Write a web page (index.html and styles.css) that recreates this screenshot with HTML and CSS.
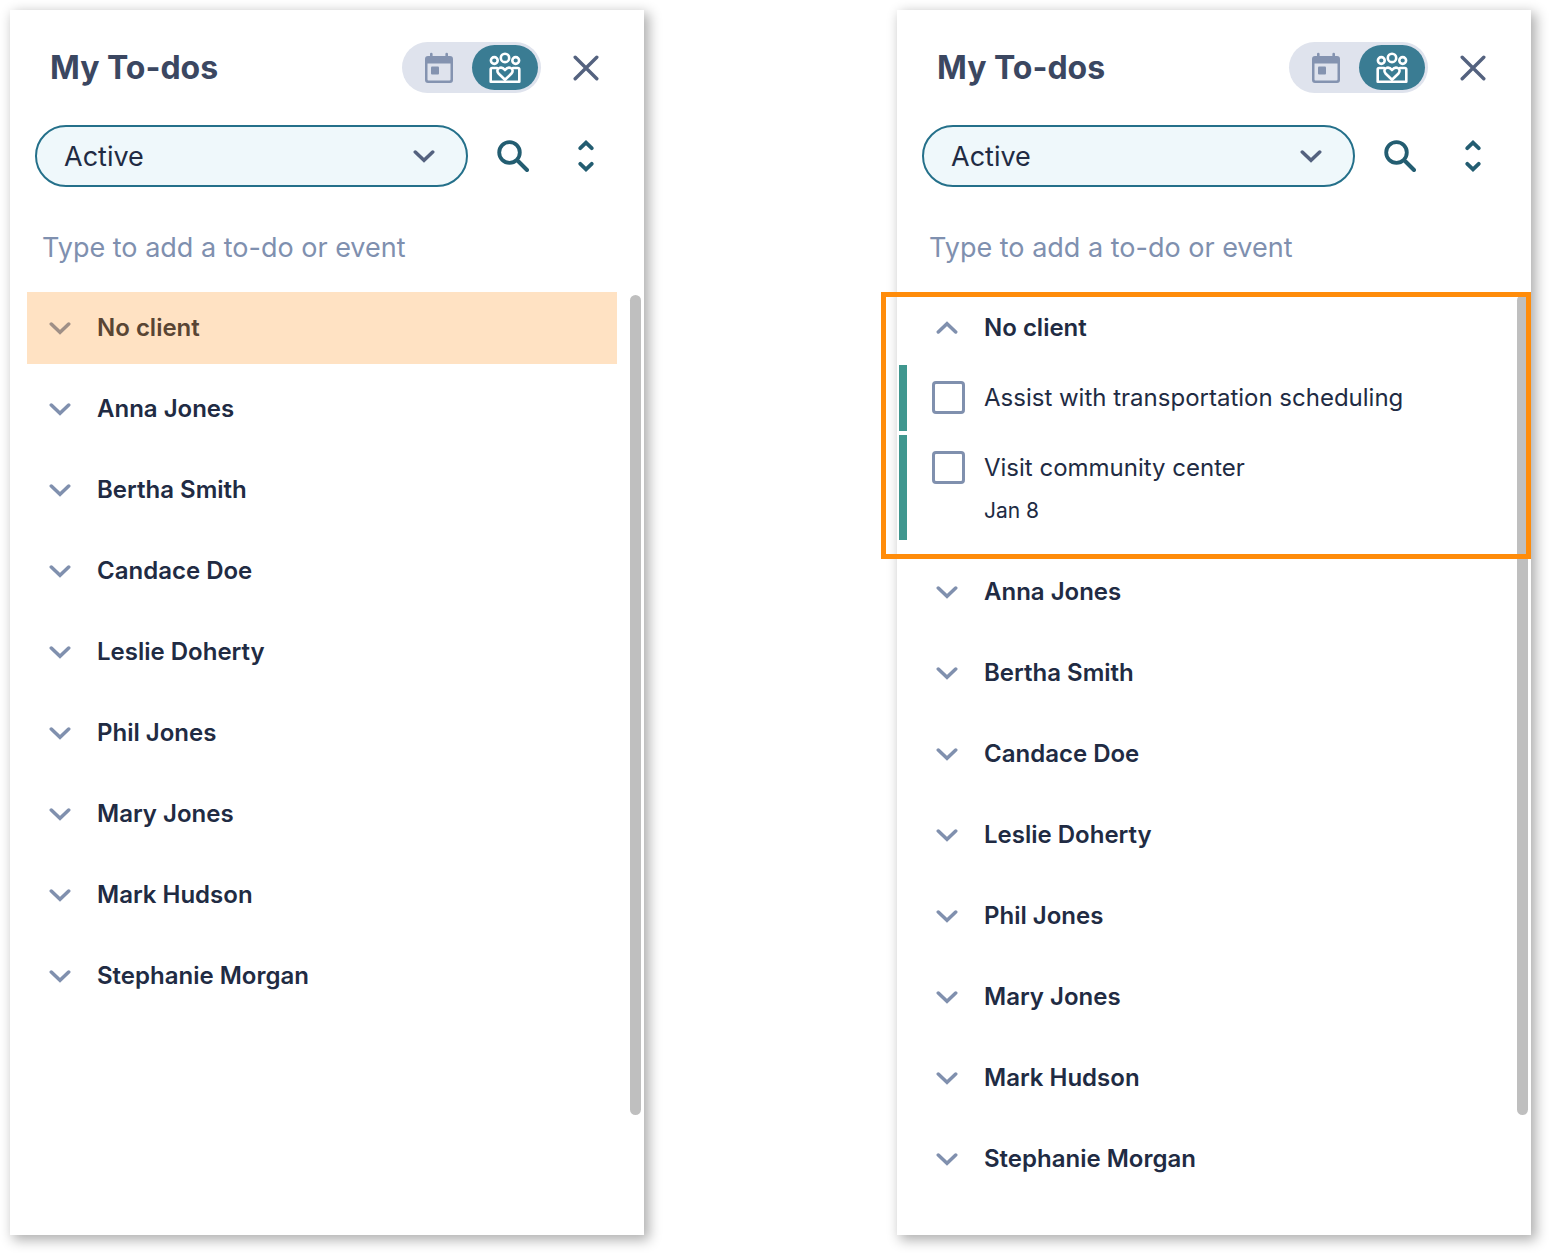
FILE: index.html
```html
<!DOCTYPE html>
<html lang="en">
<head>
    <meta charset="UTF-8">
    <title>My To-dos</title>
    <meta name="viewport" content="width=device-width, initial-scale=1.0">
    <link rel="stylesheet" href="styles.css">
</head>
<body>
    <!-- Shared icons -->
    <svg class="sprite" aria-hidden="true">
        <symbol id="chevron" viewBox="0 0 22 14">
            <path d="M2.300 3 11 11.300 19.700 3" fill="none" stroke="currentColor" stroke-width="3.500" stroke-linejoin="miter" stroke-linecap="round"/>
        </symbol>
        <symbol id="calendar" viewBox="0 0 28 32">
            <path d="M6.300 2v5M21.700 2v5" stroke="currentColor" stroke-width="2.600" stroke-linecap="round"/>
            <path fill-rule="evenodd" fill="currentColor" d="M3 4h22a3 3 0 0 1 3 3V28a3 3 0 0 1-3 3H3a3 3 0 0 1-3-3V7a3 3 0 0 1 3-3zM2.500 11.500V27.500a1 1 0 0 0 1 1h21a1 1 0 0 0 1-1V11.500z"/>
            <rect x="6" y="14.500" width="8" height="8" rx="1" fill="currentColor"/>
        </symbol>
        <symbol id="people" viewBox="0 0 32 32">
            <g fill="none" stroke="currentColor" stroke-width="2.600" stroke-linejoin="round" stroke-linecap="round">
                <circle cx="16" cy="5.900" r="4.200"/>
                <circle cx="5.300" cy="8.500" r="3.400"/>
                <circle cx="26.700" cy="8.500" r="3.400"/>
                <path d="M8 16H3.200a1.500 1.500 0 0 0-1.500 1.500V29.800h28.600V17.500a1.500 1.500 0 0 0-1.500-1.500H24"/>
                <path d="M16 27.800 9.500 21.500c-3.600-4.300 2.500-8.500 6.500-3.500 4-5 10.100-.8 6.500 3.500z"/>
            </g>
        </symbol>
        <symbol id="close" viewBox="0 0 26 26">
            <path d="M2.200 2.200l21.600 21.600M23.800 2.200L2.200 23.800" stroke="currentColor" stroke-width="3.400" stroke-linecap="round"/>
        </symbol>
        <symbol id="search" viewBox="0 0 32 32">
            <circle cx="12.500" cy="12.500" r="10.300" fill="none" stroke="currentColor" stroke-width="3.800"/>
            <path d="M21.500 21.500l8.500 8.500" stroke="currentColor" stroke-width="4" stroke-linecap="round"/>
        </symbol>
        <symbol id="sort" viewBox="0 0 16 32">
            <path d="M2.300 8.200 8 2.700l5.700 5.500M2.300 23.800 8 29.300l5.700-5.500" fill="none" stroke="currentColor" stroke-width="3.800" stroke-linecap="round"/>
        </symbol>
    </svg>

    <main class="page">
        <section class="panel">
            <header class="panel-header">
                <h2>My To-dos</h2>
                <div class="view-toggle">
                    <button type="button" aria-label="Calendar view"><svg class="icon-calendar"><use href="#calendar"/></svg></button>
                    <button type="button" class="selected" aria-label="Client view"><svg class="icon-people"><use href="#people"/></svg></button>
                </div>
                <button type="button" class="icon-button" aria-label="Close"><svg class="icon-close"><use href="#close"/></svg></button>
            </header>

            <div class="filters">
                <div class="select">
                    <select aria-label="Status"><option>Active</option></select>
                    <svg class="select-arrow"><use href="#chevron"/></svg>
                </div>
                <button type="button" class="icon-button" aria-label="Search"><svg class="icon-search"><use href="#search"/></svg></button>
                <button type="button" class="icon-button" aria-label="Sort"><svg class="icon-sort"><use href="#sort"/></svg></button>
            </div>

            <input class="new-todo" type="text" aria-label="New to-do" placeholder="Type to add a to-do or event">

            <div class="list">
                <button type="button" class="client highlighted"><svg><use href="#chevron"/></svg>No client</button>
                <button type="button" class="client"><svg><use href="#chevron"/></svg>Anna Jones</button>
                <button type="button" class="client"><svg><use href="#chevron"/></svg>Bertha Smith</button>
                <button type="button" class="client"><svg><use href="#chevron"/></svg>Candace Doe</button>
                <button type="button" class="client"><svg><use href="#chevron"/></svg>Leslie Doherty</button>
                <button type="button" class="client"><svg><use href="#chevron"/></svg>Phil Jones</button>
                <button type="button" class="client"><svg><use href="#chevron"/></svg>Mary Jones</button>
                <button type="button" class="client"><svg><use href="#chevron"/></svg>Mark Hudson</button>
                <button type="button" class="client"><svg><use href="#chevron"/></svg>Stephanie Morgan</button>
                <div class="scrollbar"></div>
            </div>
        </section>

        <section class="panel">
            <header class="panel-header">
                <h2>My To-dos</h2>
                <div class="view-toggle">
                    <button type="button" aria-label="Calendar view"><svg class="icon-calendar"><use href="#calendar"/></svg></button>
                    <button type="button" class="selected" aria-label="Client view"><svg class="icon-people"><use href="#people"/></svg></button>
                </div>
                <button type="button" class="icon-button" aria-label="Close"><svg class="icon-close"><use href="#close"/></svg></button>
            </header>

            <div class="filters">
                <div class="select">
                    <select aria-label="Status"><option>Active</option></select>
                    <svg class="select-arrow"><use href="#chevron"/></svg>
                </div>
                <button type="button" class="icon-button" aria-label="Search"><svg class="icon-search"><use href="#search"/></svg></button>
                <button type="button" class="icon-button" aria-label="Sort"><svg class="icon-sort"><use href="#sort"/></svg></button>
            </div>

            <input class="new-todo" type="text" aria-label="New to-do" placeholder="Type to add a to-do or event">

            <div class="list">
                <div class="group">
                    <button type="button" class="client open"><svg><use href="#chevron"/></svg>No client</button>
                    <div class="tasks">
                        <div class="task">
                            <input type="checkbox" id="task-1">
                            <label for="task-1">Assist with transportation scheduling</label>
                        </div>
                        <div class="task">
                            <input type="checkbox" id="task-2">
                            <label for="task-2">Visit community center<span class="date">Jan 8</span></label>
                        </div>
                    </div>
                </div>
                <button type="button" class="client"><svg><use href="#chevron"/></svg>Anna Jones</button>
                <button type="button" class="client"><svg><use href="#chevron"/></svg>Bertha Smith</button>
                <button type="button" class="client"><svg><use href="#chevron"/></svg>Candace Doe</button>
                <button type="button" class="client"><svg><use href="#chevron"/></svg>Leslie Doherty</button>
                <button type="button" class="client"><svg><use href="#chevron"/></svg>Phil Jones</button>
                <button type="button" class="client"><svg><use href="#chevron"/></svg>Mary Jones</button>
                <button type="button" class="client"><svg><use href="#chevron"/></svg>Mark Hudson</button>
                <button type="button" class="client"><svg><use href="#chevron"/></svg>Stephanie Morgan</button>
                <div class="scrollbar"></div>
            </div>
        </section>
    </main>
</body>
</html>
```

FILE: styles.css
```css
*, *::after {
    box-sizing: border-box;
}
body {
    margin: 0;
    background: #ffffff;
    color: #212b43;
    font-family: Inter, "Open Sans", sans-serif;
}
button, input, select {
    font: inherit;
    color: inherit;
}
button {
    padding: 0;
    border: 0;
    background: none;
    cursor: pointer;
}
svg {
    display: block;
    flex: none;
}
.sprite {
    position: absolute;
    width: 0;
    height: 0;
}
.page {
    display: grid;
    grid-template-columns: 1fr 1fr;
    gap: 253px;
    min-height: 100vh;
    padding: 10px 18px 18px 10px;
}
.panel {
    display: flex;
    flex-direction: column;
    background: #ffffff;
    box-shadow: 4px 4px 12px 1px rgba(0, 0, 0, 0.32);
}

/* Header */
.panel-header {
    display: flex;
    align-items: center;
    padding: 32px 35px 0 40px;
}
h2 {
    flex: 1;
    margin: 0;
    color: #3b4761;
    font-size: 32px;
    line-height: 40px;
    font-weight: 700;
}
.view-toggle {
    display: flex;
    padding: 3px 3px 3px 4px;
    margin-right: 22px;
    border-radius: 26px;
    background: #dfe3ed;
    color: #8493b0;
}
.view-toggle button {
    display: grid;
    place-items: center;
    width: 66px;
    height: 45px;
    border-radius: 23px;
}
.view-toggle .selected {
    background: #3a7c93;
    color: #ffffff;
}
.icon-calendar {
    width: 28px;
    height: 32px;
}
.icon-people {
    width: 32px;
    height: 32px;
}
.icon-button {
    display: grid;
    place-items: center;
    width: 46px;
    height: 46px;
    color: #235d71;
}
.panel-header .icon-button {
    color: #54627f;
}
.icon-close {
    width: 26px;
    height: 26px;
}

/* Filter row */
.filters {
    display: flex;
    align-items: center;
    gap: 17px;
    padding: 32px 30px 0 25px;
}
.filters .icon-button {
    width: 56px;
}
.select {
    position: relative;
    flex: 1;
}
.select select {
    appearance: none;
    display: block;
    width: 100%;
    height: 62px;
    padding: 0 60px 0 27px;
    border: 2px solid #24708a;
    border-radius: 31px;
    background: #eff8fb;
    font-size: 27px;
}
.select-arrow {
    position: absolute;
    top: 24px;
    right: 33px;
    width: 22px;
    height: 14px;
    color: #54627f;
    pointer-events: none;
}
.icon-search {
    width: 32px;
    height: 32px;
}
.icon-sort {
    width: 16px;
    height: 32px;
}
.new-todo {
    height: 60px;
    margin: 30px 36px 15px 32px;
    padding: 0;
    border: 0;
    background: none;
    font-size: 27px;
    outline: none;
}
.new-todo::placeholder {
    color: #7f90af;
    opacity: 1;
}

/* Client list */
.list {
    position: relative;
    flex: 1;
    display: flex;
    flex-direction: column;
    gap: 9px;
}
.client {
    display: flex;
    align-items: center;
    gap: 26px;
    height: 72px;
    margin: 0 27px 0 17px;
    padding: 0 0 2px 22px;
    font-size: 24px;
    font-weight: 600;
    text-align: left;
}
.client svg {
    width: 22px;
    height: 14px;
    margin-top: 2px;
    color: #8090ae;
}
.client.open svg {
    transform: rotate(180deg);
}
.client.highlighted {
    background: #ffe2c3;
    color: #594534;
}
.client.highlighted svg {
    color: #9f8f86;
}
.scrollbar {
    position: absolute;
    top: 3px;
    right: 3px;
    width: 11px;
    height: 87%;
    border-radius: 6px;
    background: #bfbfbf;
}

/* Expanded group */
.group {
    display: flex;
    flex-direction: column;
    padding-bottom: 7px;
}
.group::after {
    content: "";
    position: absolute;
    z-index: 1;
    top: 0;
    left: -16px;
    right: 0;
    height: 267px;
    border: 5px solid #ff8c0a;
    pointer-events: none;
}
.tasks {
    display: flex;
    flex-direction: column;
    gap: 4px;
    padding: 1px 0 0 2px;
}
.task {
    display: flex;
    gap: 19px;
    padding: 16px 27px 16px 25px;
    border-left: 8px solid #40978f;
    font-size: 24px;
    line-height: 34px;
}
.task input {
    appearance: none;
    flex: none;
    width: 33px;
    height: 33px;
    margin: 0;
    border: 3px solid #8090ae;
    border-radius: 4px;
}
.task input:checked {
    background: #8090ae;
}
.date {
    display: block;
    margin-top: 13px;
    font-size: 21px;
    line-height: 26px;
}
```
